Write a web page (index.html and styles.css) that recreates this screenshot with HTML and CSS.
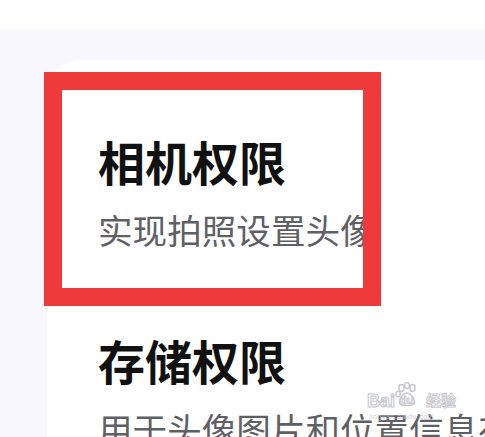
FILE: index.html
```html
<!DOCTYPE html>
<html lang="zh-CN">
<head>
<meta charset="utf-8">
<title>权限说明</title>
<link rel="stylesheet" href="styles.css">
</head>
<body>
<div class="topbar"></div>
<main class="page">
  <section class="card">
    <div class="item">
      <h2 class="title">相机权限</h2>
      <p class="desc">实现拍照设置头像</p>
    </div>
    <div class="item">
      <h2 class="title">存储权限</h2>
      <p class="desc">用于头像图片和位置信息存储</p>
    </div>
  </section>
</main>
<div class="highlight"></div>
<div class="watermark">
  <span class="wm-bai">Bai</span>
  <span class="wm-paw">
    <svg width="24" height="25" viewBox="0 0 24 25">
      <g fill="none" stroke="#c8c8ce" stroke-width="1.5">
        <ellipse cx="6.5" cy="6" rx="2.6" ry="3.4"/>
        <ellipse cx="12" cy="3.6" rx="2.4" ry="3"/>
        <ellipse cx="17.5" cy="6" rx="2.6" ry="3.4"/>
        <ellipse cx="3" cy="12" rx="2.2" ry="2.8"/>
        <path d="M5 22 C3 18 8 11 12 11 C16 11 21 18 19 22 C17 24 7 24 5 22 Z"/>
      </g>
    </svg>
    <span class="wm-du">du</span>
  </span>
  <span class="wm-jy">经验</span>
  <span class="wm-url">jingyan.baidu.com</span>
</div>
</body>
</html>
```
FILE: styles.css
```css
html, body {
  margin: 0;
  padding: 0;
}
body {
  width: 485px;
  height: 437px;
  overflow: hidden;
  background: #ffffff;
  font-family: "Noto Sans CJK SC", "Noto Sans", sans-serif;
  position: relative;
}
.topbar {
  height: 30px;
  background: #ffffff;
}
.page {
  background: #f7f7fd;
  padding: 30px 0 0 47px;
  height: 407px;
  box-sizing: border-box;
}
.card {
  background: #ffffff;
  border-top-left-radius: 34px;
  height: 100%;
  padding: 78px 0 0 51px;
  box-sizing: border-box;
  overflow: hidden;
}
.item {
  display: flex;
  flex-direction: column;
  margin-bottom: 91px;
}
.title {
  margin: 0;
  font-size: 47px;
  line-height: 46px;
  font-weight: 700;
  color: #111111;
  white-space: nowrap;
}
.desc {
  margin: 28px 0 0 0;
  font-size: 34.6px;
  line-height: 34px;
  font-weight: 400;
  color: #5f5f66;
  white-space: nowrap;
}
.highlight {
  position: absolute;
  left: 44px;
  top: 72px;
  width: 337px;
  height: 234px;
  box-sizing: border-box;
  border: 18px solid #ee3a3a;
}
.watermark {
  position: absolute;
  left: 367px;
  top: 382px;
  width: 95px;
  height: 42px;
  font-family: "Liberation Sans", "Noto Sans CJK SC", sans-serif;
}
.wm-bai {
  position: absolute;
  left: 0;
  top: 10px;
  font-size: 18px;
  line-height: 18px;
  font-weight: 700;
  color: rgba(255,255,255,0.6);
  -webkit-text-stroke: 1.1px #c8c8ce;
}
.wm-paw {
  position: absolute;
  left: 28px;
  top: 0;
  width: 24px;
  height: 25px;
}
.wm-paw svg {
  display: block;
}
.wm-du {
  position: absolute;
  left: 5px;
  top: 13px;
  font-size: 11px;
  line-height: 11px;
  font-weight: 700;
  color: rgba(255,255,255,0.6);
  -webkit-text-stroke: 0.9px #c8c8ce;
}
.wm-jy {
  position: absolute;
  left: 59px;
  top: 10px;
  font-family: "Noto Sans CJK SC", sans-serif;
  font-size: 15px;
  line-height: 16px;
  font-weight: 700;
  color: rgba(255,255,255,0.6);
  -webkit-text-stroke: 0.9px #c8c8ce;
}
.wm-url {
  position: absolute;
  left: 2px;
  top: 31px;
  font-size: 7px;
  line-height: 8px;
  color: rgba(190,190,198,0.8);
  letter-spacing: 0.5px;
}
```
